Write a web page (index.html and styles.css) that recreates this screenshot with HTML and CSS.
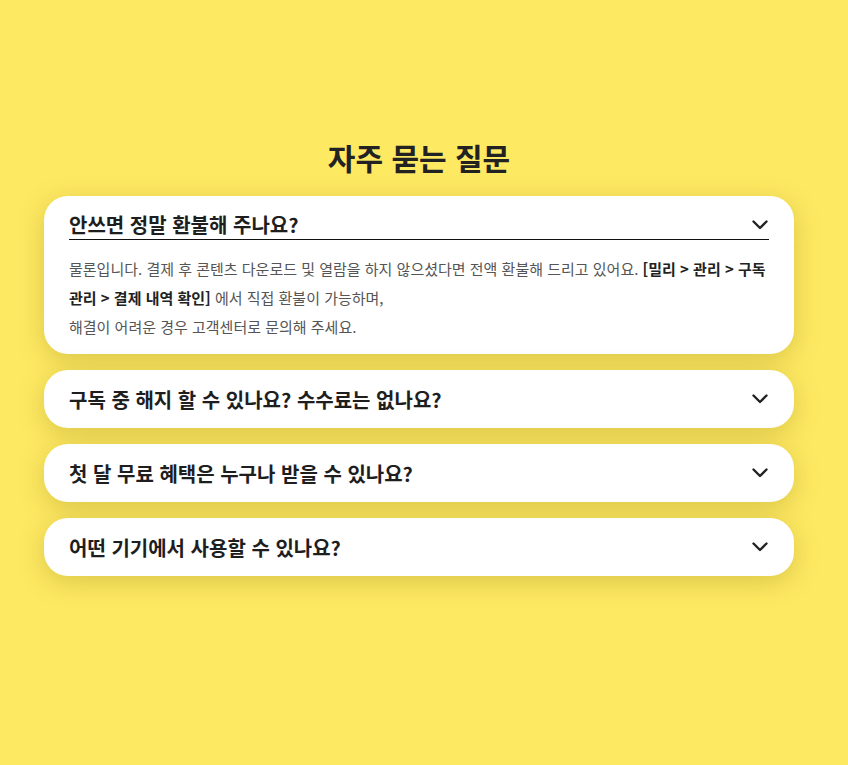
FILE: index.html
```html
<!DOCTYPE html>
<html lang="ko">
<head>
<meta charset="utf-8">
<link rel="stylesheet" href="styles.css">
</head>
<body>
<main class="faq">
  <h1 class="faq-title">자주 묻는 질문</h1>
  <div class="faq-list">
    <div class="faq-item open">
      <div class="faq-q">
        <span>안쓰면 정말 환불해 주나요?</span>
        <svg class="chev" viewBox="0 0 16 10" width="16" height="10"><path d="M1.5 1.5 L8 8 L14.5 1.5" fill="none" stroke="#222" stroke-width="2.4" stroke-linecap="round" stroke-linejoin="round"/></svg>
      </div>
      <p class="faq-a">물론입니다. 결제 후 콘텐츠 다운로드 및 열람을 하지 않으셨다면 전액 환불해 드리고 있어요. <b>[밀리 &gt; 관리 &gt; 구독 관리 &gt; 결제 내역 확인]</b> 에서 직접 환불이 가능하며,<br>해결이 어려운 경우 고객센터로 문의해 주세요.</p>
    </div>
    <div class="faq-item">
      <div class="faq-q">
        <span>구독 중 해지 할 수 있나요? 수수료는 없나요?</span>
        <svg class="chev" viewBox="0 0 16 10" width="16" height="10"><path d="M1.5 1.5 L8 8 L14.5 1.5" fill="none" stroke="#222" stroke-width="2.4" stroke-linecap="round" stroke-linejoin="round"/></svg>
      </div>
    </div>
    <div class="faq-item">
      <div class="faq-q">
        <span>첫 달 무료 혜택은 누구나 받을 수 있나요?</span>
        <svg class="chev" viewBox="0 0 16 10" width="16" height="10"><path d="M1.5 1.5 L8 8 L14.5 1.5" fill="none" stroke="#222" stroke-width="2.4" stroke-linecap="round" stroke-linejoin="round"/></svg>
      </div>
    </div>
    <div class="faq-item">
      <div class="faq-q">
        <span>어떤 기기에서 사용할 수 있나요?</span>
        <svg class="chev" viewBox="0 0 16 10" width="16" height="10"><path d="M1.5 1.5 L8 8 L14.5 1.5" fill="none" stroke="#222" stroke-width="2.4" stroke-linecap="round" stroke-linejoin="round"/></svg>
      </div>
    </div>
  </div>
</main>
</body>
</html>
```

FILE: styles.css
```css
html, body {
  margin: 0;
  padding: 0;
}
body {
  background: #fee962;
  font-family: "Noto Sans CJK KR", "Noto Sans", sans-serif;
  color: #222;
  min-height: 765px;
}
.faq {
  width: 750px;
  margin: 0 0 0 44px;
  padding-top: 135px;
}
.faq-title {
  margin: 0 0 17px;
  text-align: center;
  font-size: 30px;
  font-weight: 700;
  line-height: 44px;
  color: #222;
}
.faq-list {
  display: flex;
  flex-direction: column;
  gap: 16px;
}
.faq-item {
  background: #fff;
  border-radius: 24px;
  padding: 0 25px;
  box-shadow: 0 6px 26px rgba(120, 100, 0, 0.26);
}
.faq-q {
  height: 58px;
  display: flex;
  align-items: center;
  justify-content: space-between;
  font-size: 20px;
  font-weight: 700;
  color: #1e1e1e;
}
.faq-item.open .faq-q {
  box-sizing: border-box;
  height: 44px;
  padding-top: 14px;
  border-bottom: 1px solid #111;
}
.chev {
  display: block;
  margin-right: 1px;
}
.faq-a {
  margin: 0;
  padding: 14px 0 13px;
  font-size: 15px;
  line-height: 29px;
  color: #555;
}
.faq-a b {
  color: #222;
  font-weight: 700;
}
```
